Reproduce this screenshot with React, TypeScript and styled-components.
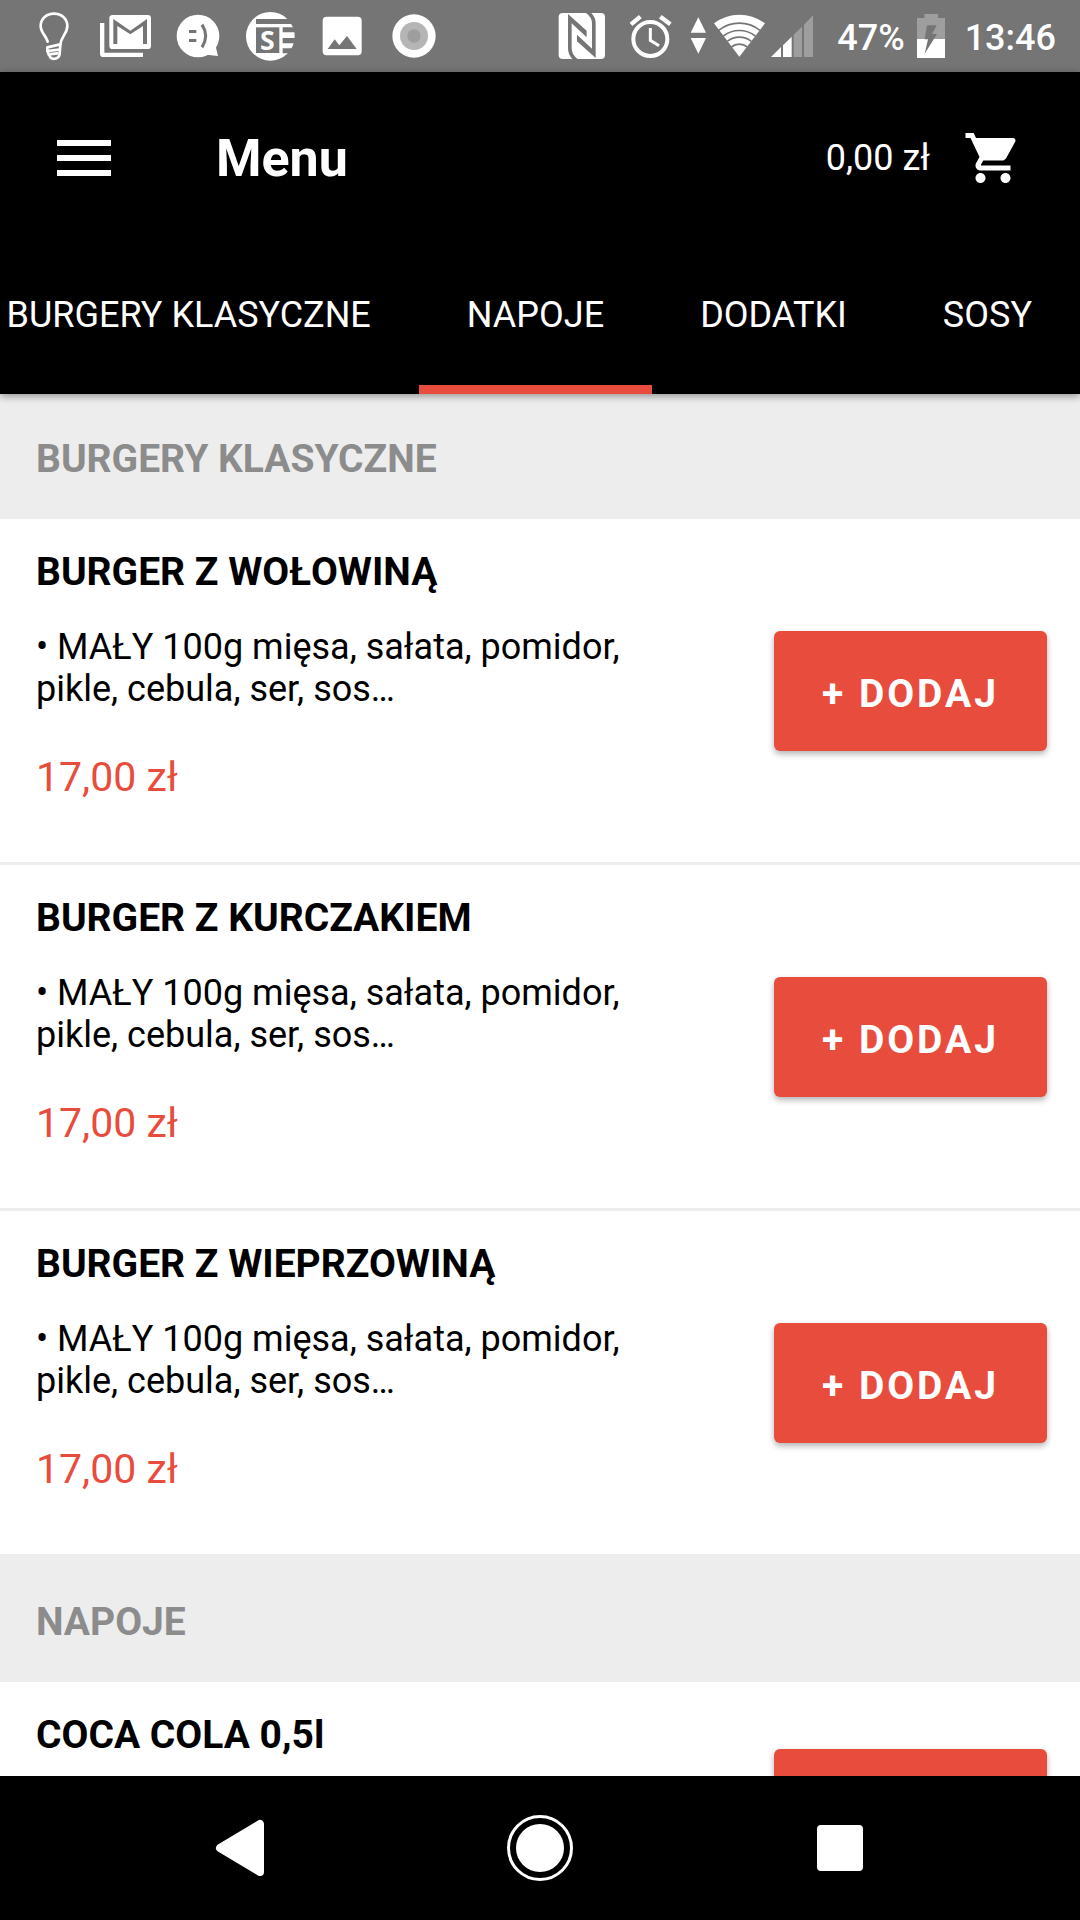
import React from 'react';
import styled, { createGlobalStyle } from 'styled-components';

const color = {
  accent: '#e84c3d',
  status: '#757575',
  dim: '#9e9e9e',
  band: '#ededed',
  muted: '#8c8c8c',
};

const GlobalStyle = createGlobalStyle`
  *, *::before, *::after { box-sizing: border-box; }
  body {
    margin: 0;
    background: #fff;
    font-family: Roboto, "Noto Sans", sans-serif;
  }
  h1, h2, h3, p { margin: 0; }
  button {
    margin: 0;
    padding: 0;
    border: 0;
    background: none;
    color: inherit;
    font: inherit;
    cursor: pointer;
  }
  svg { display: block; flex: none; overflow: visible; }
`;

const Screen = styled.div`
  display: flex;
  flex-direction: column;
  height: 100vh;
  overflow: hidden;
`;

/* ---------- system status bar ---------- */

const StatusBar = styled.div`
  display: flex;
  flex: none;
  justify-content: space-between;
  align-items: center;
  height: 72px;
  padding: 0 24px 0 30px;
  background: ${color.status};
  color: #fff;
  font-size: 36px;
  font-weight: 500;
  line-height: 42px;
`;

const StatusGroup = styled.div<{ $gap?: number }>`
  display: flex;
  align-items: center;
  gap: ${({ $gap = 0 }) => $gap}px;
`;

const StatusText = styled.span`
  padding-top: 4px;
`;

const Notification = ({ label, children }: { label: string; children: React.ReactNode }) => (
  <svg width="48" height="48" viewBox="0 0 144 144" role="img" aria-label={label}>
    {children}
  </svg>
);

const Notifications = () => (
  <StatusGroup $gap={24}>
    <Notification label="Żarówka">
      <g fill="none" stroke="#fff" strokeWidth="8" strokeLinecap="round" strokeLinejoin="round">
        <path d="M53 89C48 70 32 62 32 42C32 20 50 5 72 5C94 5 112 20 112 42C112 66 93 72 91 99L89 126C86 144 62 144 59 132L53 120" />
        <path d="M91 97L52 106V117L88 113M56 127L82 124" />
      </g>
    </Notification>
    <Notification label="Gmail">
      <path fill="#fff" d="M-6 33H7V122H123V135H4Q-6 135 -6 125Z" />
      <rect x="22" y="9" width="125" height="102" rx="10" fill="#fff" />
      <path fill={color.status} d="M34 96V21L85 56L135 21V96H123V42L85 67L46 42V96Z" />
    </Notification>
    <Notification label="Wiadomość">
      <circle cx="72" cy="72" r="64" fill="#fff" />
      <path fill="#fff" d="M98 128L132 132L124 98Z" />
      <path fill={color.status} d="M45 54H67V63H45ZM45 81H67V90H45Z" />
      <path d="M84 38Q106 72 84 106" fill="none" stroke={color.status} strokeWidth="9" />
    </Notification>
    <Notification label="Sport">
      <circle cx="73" cy="73" r="73" fill="#fff" />
      <g fill={color.status}>
        <path d="M30 21H128L142 36H30Z" />
        <path d="M30 46H100V123H30Z" />
        <path d="M110 46H148V61H110ZM110 78H148V94H110ZM110 109H148V124H110Z" />
      </g>
      <text x="64" y="114" fill="#fff" fontSize="80" fontWeight="700" fontFamily="Open Sans, sans-serif" textAnchor="middle">
        S
      </text>
    </Notification>
    <Notification label="Zdjęcie">
      <rect x="14" y="14" width="117" height="116" rx="12" fill="#fff" />
      <path fill={color.status} d="M29 111L50 82L64 100L87 72L116 111Z" />
    </Notification>
    <Notification label="Nagrywanie">
      <circle cx="72" cy="72" r="65" fill="#fff" />
      <circle cx="72" cy="72" r="42" fill="#b5b5b5" />
      <circle cx="72" cy="72" r="20" fill={color.dim} />
    </Notification>
  </StatusGroup>
);

const Connectivity = () => (
  <StatusGroup>
    <svg width="69" height="72" viewBox="0 0 207 216" role="img" aria-label="NFC">
      <rect x="2" y="39" width="139" height="138" rx="12" fill="#fff" />
      <g fill={color.status}>
        <path d="M30 42L86 92V112L41 70V145Q41 165 60 178H44Q30 165 30 145Z" />
        <path d="M113 174L57 124V104L102 146V71Q102 51 83 38H99Q113 51 113 71Z" />
      </g>
    </svg>
    <svg width="63" height="72" viewBox="0 0 189 216" role="img" aria-label="Alarm">
      <g fill="none" stroke="#fff">
        <circle cx="70" cy="117" r="51" strokeWidth="12" />
        <path d="M12 73L40 50M100 50L130 73" strokeWidth="13" />
        <path d="M70 84V121L96 137" strokeWidth="9" />
      </g>
    </svg>
    <svg width="78" height="72" viewBox="0 0 234 216" role="img" aria-label="Wi-Fi">
      <path fill="#fff" d="M2 98L25 52L48 98ZM2 114H48L25 161Z" />
      <path fill="#fff" d="M148 170L72 70Q106 44 148 44Q190 44 225 70Z" />
      <g fill="none" stroke={color.status} strokeWidth="5">
        <path d="M86 91A100 100 0 0 1 210 91" />
        <path d="M100 108A78 78 0 0 1 196 108" />
        <path d="M112 124A58 58 0 0 1 184 124" />
        <path d="M124 141A37 37 0 0 1 172 141" />
      </g>
    </svg>
    <svg width="49" height="72" viewBox="0 0 147 216" role="img" aria-label="Zasięg">
      <path fill={color.dim} d="M77 104L102 80V171H77ZM108 74L135 46V171H108Z" />
      <path fill="#fff" d="M9 171L39 141V171ZM45 136L71 110V171H45Z" />
    </svg>
  </StatusGroup>
);

const BatteryIcon = () => (
  <svg width="28" height="72" viewBox="0 0 84 216" role="img" aria-label="Bateria">
    <path fill={color.dim} d="M22 42H63V54H84V117H0V54H22Z" />
    <path fill="#fff" d="M0 117H84V174H0Z" />
    <path fill={color.status} d="M30 76H59L45 102H60L23 161L33 118H23Z" />
  </svg>
);

/* ---------- app header ---------- */

const Header = styled.header`
  position: relative;
  z-index: 1;
  flex: none;
  background: #000;
  color: #fff;
  box-shadow: 0 2px 8px rgba(0, 0, 0, 0.4);
`;

const Toolbar = styled.div`
  display: flex;
  align-items: center;
  height: 172px;
  padding: 0 57px 0 48px;
`;

const Title = styled.h1`
  flex: 1;
  padding: 2px 0 0 96px;
  font-size: 52px;
  font-weight: 700;
  line-height: 60px;
`;

const CartButton = styled.button`
  display: flex;
  align-items: center;
  gap: 33px;
  font-size: 36px;
  line-height: 44px;
`;

const Tabs = styled.nav`
  display: flex;
  justify-content: flex-end;
  height: 150px;
  overflow: hidden;
`;

const Tab = styled.button<{ $active: boolean }>`
  flex: none;
  padding: 0 48px;
  border-bottom: 9px solid ${({ $active }) => ($active ? color.accent : 'transparent')};
  font-size: 36px;
  line-height: 42px;
  white-space: nowrap;
`;

/* ---------- menu list ---------- */

const List = styled.main`
  flex: 1;
  min-height: 0;
  overflow: hidden;
`;

const SectionTitle = styled.h2`
  padding: 42px 36px 37px;
  background: ${color.band};
  color: ${color.muted};
  font-size: 39px;
  font-weight: 700;
  line-height: 46px;
`;

const Item = styled.article`
  display: flex;
  justify-content: space-between;
  gap: 84px;
  min-height: 257px;
  padding: 0 33px 0 36px;
  border-bottom: 3px solid ${color.band};
`;

const ItemBody = styled.div`
  flex: 1;
  min-width: 0;
  padding: 30px 0 62px;
`;

const ItemName = styled.h3`
  font-size: 39px;
  font-weight: 700;
  line-height: 46px;
`;

const Description = styled.p`
  margin-top: 31px;
  font-size: 36px;
  line-height: 42px;
`;

const Price = styled.p`
  margin-top: 44px;
  color: ${color.accent};
  font-size: 41px;
  line-height: 46px;
`;

const AddButton = styled.button`
  flex: none;
  align-self: center;
  min-width: 273px;
  height: 120px;
  padding: 6px 0 0;
  border-radius: 6px;
  background: ${color.accent};
  box-shadow: 0 3px 6px rgba(0, 0, 0, 0.3);
  color: #fff;
  font-size: 39px;
  font-weight: 700;
  line-height: 46px;
  letter-spacing: 3px;
`;

/* ---------- system navigation ---------- */

const SystemNav = styled.nav`
  display: grid;
  flex: none;
  grid-template-columns: repeat(3, 1fr);
  height: 144px;
  padding: 0 90px;
  background: #000;
`;

const SystemButton = styled.button`
  display: flex;
  align-items: center;
  justify-content: center;
`;

const tabs = ['BURGERY KLASYCZNE', 'NAPOJE', 'DODATKI', 'SOSY'];
const activeTab = 'NAPOJE';

interface Product {
  name: string;
  description?: string;
  price?: string;
}

const burgerDescription = '• MAŁY 100g mięsa, sałata, pomidor, pikle, cebula, ser, sos…';

const sections: { title: string; products: Product[] }[] = [
  {
    title: 'BURGERY KLASYCZNE',
    products: [
      { name: 'BURGER Z WOŁOWINĄ', description: burgerDescription, price: '17,00 zł' },
      { name: 'BURGER Z KURCZAKIEM', description: burgerDescription, price: '17,00 zł' },
      { name: 'BURGER Z WIEPRZOWINĄ', description: burgerDescription, price: '17,00 zł' },
    ],
  },
  { title: 'NAPOJE', products: [{ name: 'COCA COLA 0,5l' }] },
];

const ProductRow = ({ name, description, price }: Product) => (
  <Item>
    <ItemBody>
      <ItemName>{name}</ItemName>
      {description && <Description>{description}</Description>}
      {price && <Price>{price}</Price>}
    </ItemBody>
    <AddButton type="button">+ DODAJ</AddButton>
  </Item>
);

export default function App() {
  return (
    <Screen>
      <GlobalStyle />
      <StatusBar>
        <Notifications />
        <StatusGroup $gap={20}>
          <Connectivity />
          <StatusGroup $gap={12}>
            <StatusText>47%</StatusText>
            <BatteryIcon />
          </StatusGroup>
          <StatusText>13:46</StatusText>
        </StatusGroup>
      </StatusBar>

      <Header>
        <Toolbar>
          <button type="button" aria-label="Otwórz menu">
            <svg width="72" height="72" viewBox="0 0 24 24" fill="#fff">
              <path d="M3 18h18v-2H3v2zm0-5h18v-2H3v2zm0-7v2h18V6H3z" />
            </svg>
          </button>
          <Title>Menu</Title>
          <CartButton type="button">
            <span>0,00 zł</span>
            <svg width="60" height="60" viewBox="0 0 24 24" fill="#fff" aria-hidden="true">
              <path d="M7 18c-1.1 0-1.99.9-1.99 2S5.9 22 7 22s2-.9 2-2-.9-2-2-2zM1 2v2h2l3.6 7.59-1.35 2.45c-.16.28-.25.61-.25.96 0 1.1.9 2 2 2h12v-2H7.42c-.14 0-.25-.11-.25-.25l.03-.12.9-1.63h7.45c.75 0 1.41-.41 1.75-1.03l3.58-6.49c.08-.14.12-.31.12-.48 0-.55-.45-1-1-1H5.21l-.94-2H1zm16 16c-1.1 0-1.99.9-1.99 2s.89 2 1.99 2 2-.9 2-2-.9-2-2-2z" />
            </svg>
          </CartButton>
        </Toolbar>
        <Tabs>
          {tabs.map((tab) => (
            <Tab key={tab} type="button" $active={tab === activeTab} aria-pressed={tab === activeTab}>
              {tab}
            </Tab>
          ))}
        </Tabs>
      </Header>

      <List>
        {sections.map((section) => (
          <section key={section.title}>
            <SectionTitle>{section.title}</SectionTitle>
            {section.products.map((product) => (
              <ProductRow key={product.name} {...product} />
            ))}
          </section>
        ))}
      </List>

      <SystemNav>
        <SystemButton type="button" aria-label="Wstecz">
          <svg width="48" height="56" viewBox="0 0 48 56">
            <path d="M4 28L44 4V52Z" fill="#fff" stroke="#fff" strokeWidth="8" strokeLinejoin="round" />
          </svg>
        </SystemButton>
        <SystemButton type="button" aria-label="Ekran główny">
          <svg width="66" height="66" viewBox="0 0 66 66">
            <circle cx="33" cy="33" r="31.5" fill="none" stroke="#fff" strokeWidth="3" />
            <circle cx="33" cy="33" r="24" fill="#fff" />
          </svg>
        </SystemButton>
        <SystemButton type="button" aria-label="Ostatnie aplikacje">
          <svg width="46" height="46" viewBox="0 0 46 46">
            <rect width="46" height="46" rx="4" fill="#fff" />
          </svg>
        </SystemButton>
      </SystemNav>
    </Screen>
  );
}
